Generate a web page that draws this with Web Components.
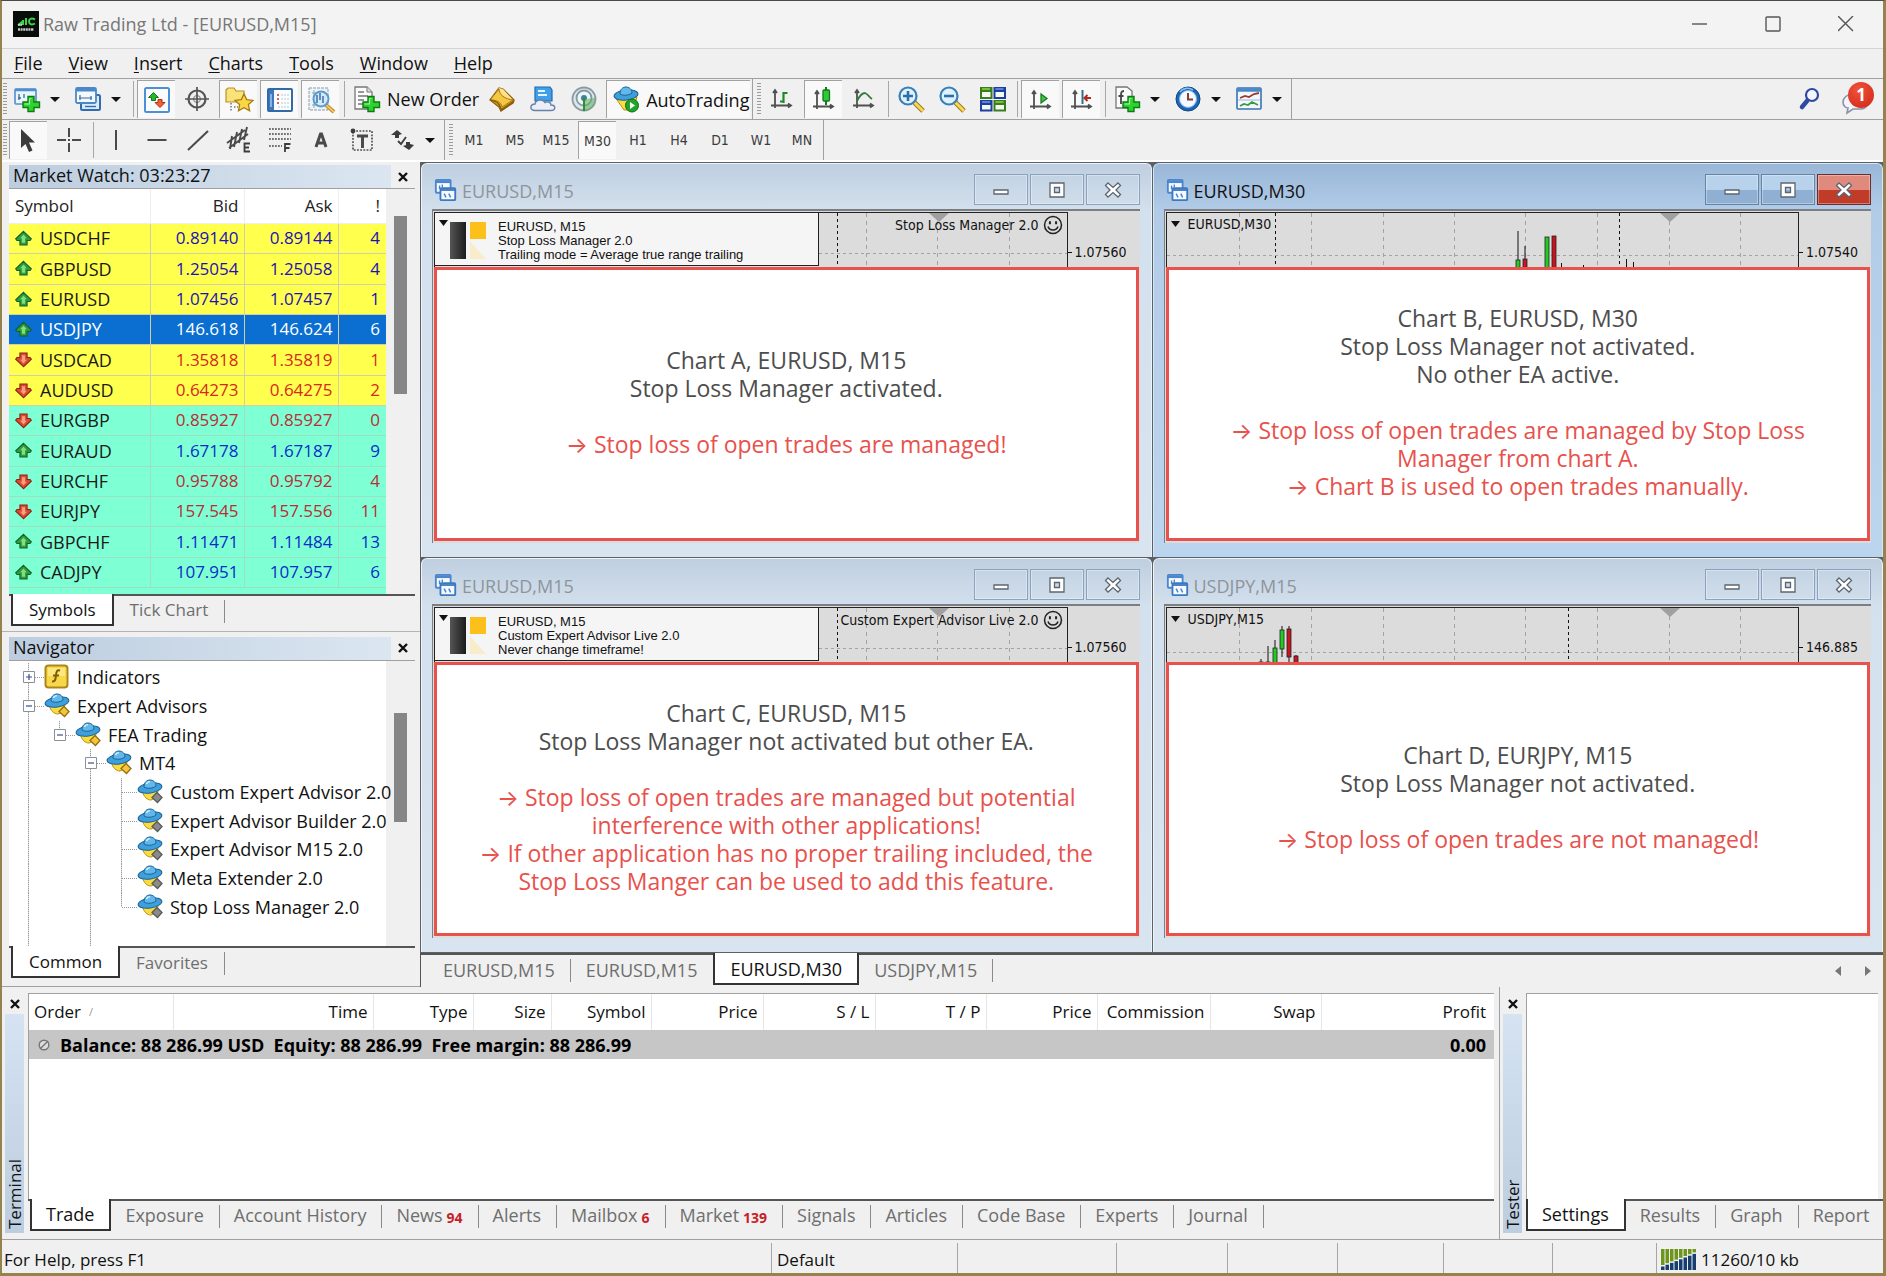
<!DOCTYPE html>
<html lang="en">
<head>
<meta charset="utf-8">
<title>Raw Trading Ltd - [EURUSD,M15]</title>
<style>
  :root {
    --ui: "Open Sans", "Inter", "Noto Sans", sans-serif;
    --chart: "DejaVu Sans Condensed", "DejaVu Sans", sans-serif;
    --face: #f0f0f0;
    --line: #a0a0a0;
    --dark: #555555;
    --caption: linear-gradient(90deg, #bccddf, #dbe6f1);
    --red: #e8514c;
  }

  * { box-sizing: border-box; }

  body {
    margin: 0;
    min-height: 100vh;
    display: flex;
    flex-direction: column;
    font: 17px/22px var(--ui);
    color: #111;
    background: var(--face);
    border: solid #94824f;
    border-width: 1px 3px 3px 2px;
    border-top-color: #4c4a44;
  }

  .bars { display: flex; border-bottom: 1px solid var(--line); }
  .bars.second { border-bottom: 2px solid #fff; }
  .bars tool-bar + tool-bar { padding-left: 4px; }
  .bars .right { margin-left: auto; display: flex; align-items: center; gap: 10px; padding-right: 9px; }

  main { flex: 1; display: grid; grid-template-columns: 418px 1fr; }
  .side { display: flex; flex-direction: column; border-bottom: 1px solid var(--line); }
  .charts { display: flex; flex-direction: column; min-width: 0; }
  .charts tab-strip { --lead: 7px; --size: 18px; --strip: 34px; --pad: 15px; --pad-end: 15px; border-left: 1px solid var(--dark); }
  .mdi {
    flex: 1;
    display: grid;
    grid-template: 1fr 1fr / 1fr 1fr;
    gap: 1px;
    padding: 1px 0 1px 1px;
    background: #5c6165;
  }
  .docked { display: grid; grid-template-columns: 1497px 1fr; height: 253px; border-bottom: 1px solid var(--line); }
  .docked tab-strip { --size: 18px; --strip: 40px; --pad: 14px; --pad-end: 15px; --raise: 3px; }
</style>
</head>
<body>

<title-bar>Raw Trading Ltd - [EURUSD,M15]</title-bar>
<menu-bar></menu-bar>

<div class="bars">
  <tool-bar>
    <tool-button icon="newChart" label="New chart" drop></tool-button>
    <tool-button icon="profiles" label="Profiles" drop></tool-button>
    <tool-sep></tool-sep>
    <tool-button icon="market" label="Market Watch" on></tool-button>
    <tool-button icon="target" label="Data Window"></tool-button>
    <tool-button icon="favorites" label="Navigator" on></tool-button>
    <tool-button icon="terminal" label="Terminal" on></tool-button>
    <tool-button icon="tester" label="Strategy Tester" on></tool-button>
    <tool-sep></tool-sep>
    <tool-button icon="newOrder" wide>New Order</tool-button>
    <tool-button icon="gold" label="MetaEditor"></tool-button>
    <tool-button icon="cloud" label="Virtual Hosting"></tool-button>
    <tool-button icon="signal" label="Signals"></tool-button>
    <tool-button icon="auto" wide on>AutoTrading</tool-button>
  </tool-bar>
  <tool-bar>
    <tool-button icon="bars" label="Bar Chart"></tool-button>
    <tool-button icon="candles" label="Candlesticks" on></tool-button>
    <tool-button icon="lineChart" label="Line Chart"></tool-button>
    <tool-sep></tool-sep>
    <tool-button icon="zoomIn" label="Zoom In"></tool-button>
    <tool-button icon="zoomOut" label="Zoom Out"></tool-button>
    <tool-button icon="tile" label="Tile Windows"></tool-button>
    <tool-sep></tool-sep>
    <tool-button icon="autoScroll" label="Auto Scroll" on></tool-button>
    <tool-button icon="chartShift" label="Chart Shift" on></tool-button>
    <tool-sep></tool-sep>
    <tool-button icon="indicator" label="Indicators" drop></tool-button>
    <tool-button icon="clock" label="Periods" drop></tool-button>
    <tool-button icon="template" label="Templates" drop></tool-button>
  </tool-bar>
  <div class="right">
    <tool-button icon="search" label="Search"></tool-button>
    <chat-badge>1</chat-badge>
  </div>
</div>

<div class="bars second">
  <tool-bar>
    <tool-button icon="cursor" label="Cursor" on></tool-button>
    <tool-button icon="cross" label="Crosshair"></tool-button>
    <tool-sep></tool-sep>
    <tool-button icon="vline" label="Vertical Line"></tool-button>
    <tool-button icon="hline" label="Horizontal Line"></tool-button>
    <tool-button icon="trend" label="Trendline"></tool-button>
    <tool-button icon="channel" label="Equidistant Channel"></tool-button>
    <tool-button icon="fibo" label="Fibonacci Retracement"></tool-button>
    <tool-button icon="text" label="Text"></tool-button>
    <tool-button icon="textLabel" label="Text Label"></tool-button>
    <tool-button icon="arrows" label="Arrows" drop></tool-button>
  </tool-bar>
  <tool-bar>
    <tool-button>M1</tool-button>
    <tool-button>M5</tool-button>
    <tool-button>M15</tool-button>
    <tool-button on>M30</tool-button>
    <tool-button>H1</tool-button>
    <tool-button>H4</tool-button>
    <tool-button>D1</tool-button>
    <tool-button>W1</tool-button>
    <tool-button>MN</tool-button>
  </tool-bar>
</div>

<main>
  <div class="side">
    <side-panel caption="Market Watch: 03:23:27">
      <market-watch></market-watch>
      <tab-strip slot="tabs" style="--strip: 37px">
        <tab-item active>Symbols</tab-item>
        <tab-item>Tick Chart</tab-item>
      </tab-strip>
    </side-panel>
    <side-panel caption="Navigator" style="flex: 1; --thumb-top: 52px; --thumb-height: 109px">
      <nav-tree></nav-tree>
      <tab-strip slot="tabs" style="--strip: 40px">
        <tab-item active>Common</tab-item>
        <tab-item>Favorites</tab-item>
      </tab-strip>
    </side-panel>
  </div>

  <div class="charts">
    <div class="mdi">
      <chart-window caption="EURUSD,M15" price="1.07560" plot="a" info="EURUSD, M15|Stop Loss Manager 2.0|Trailing mode = Average true range trailing" expert="Stop Loss Manager 2.0">
        <p>Chart A, EURUSD, M15<br>Stop Loss Manager activated.</p>
        <p class="note">→ Stop loss of open trades are managed!</p>
      </chart-window>
      <chart-window caption="EURUSD,M30" price="1.07540" plot="b" active>
        <p>Chart B, EURUSD, M30<br>Stop Loss Manager not activated.<br>No other EA active.</p>
        <p class="note">→ Stop loss of open trades are managed by Stop Loss<br>Manager from chart A.<br>→ Chart B is used to open trades manually.</p>
      </chart-window>
      <chart-window caption="EURUSD,M15" price="1.07560" plot="a" info="EURUSD, M15|Custom Expert Advisor Live 2.0|Never change timeframe!" expert="Custom Expert Advisor Live 2.0">
        <p>Chart C, EURUSD, M15<br>Stop Loss Manager not activated but other EA.</p>
        <p class="note">→ Stop loss of open trades are managed but potential<br>interference with other applications!<br>→ If other application has no proper trailing included, the<br>Stop Loss Manger can be used to add this feature.</p>
      </chart-window>
      <chart-window caption="USDJPY,M15" price="146.885" plot="d">
        <p>Chart D, EURJPY, M15<br>Stop Loss Manager not activated.</p>
        <p class="note">→ Stop loss of open trades are not managed!</p>
      </chart-window>
    </div>
    <tab-strip arrows>
      <tab-item>EURUSD,M15</tab-item>
      <tab-item nosep>EURUSD,M15</tab-item>
      <tab-item active>EURUSD,M30</tab-item>
      <tab-item>USDJPY,M15</tab-item>
    </tab-strip>
  </div>
</main>

<div class="docked">
  <dock-panel caption="Terminal">
    <trade-table></trade-table>
    <tab-strip slot="tabs">
      <tab-item active>Trade</tab-item>
      <tab-item>Exposure</tab-item>
      <tab-item>Account History</tab-item>
      <tab-item count="94">News</tab-item>
      <tab-item>Alerts</tab-item>
      <tab-item count="6">Mailbox</tab-item>
      <tab-item count="139">Market</tab-item>
      <tab-item>Signals</tab-item>
      <tab-item>Articles</tab-item>
      <tab-item>Code Base</tab-item>
      <tab-item>Experts</tab-item>
      <tab-item>Journal</tab-item>
    </tab-strip>
  </dock-panel>
  <dock-panel caption="Tester" style="border-left: 1px solid var(--line)">
    <tab-strip slot="tabs">
      <tab-item active>Settings</tab-item>
      <tab-item>Results</tab-item>
      <tab-item>Graph</tab-item>
      <tab-item nosep>Report</tab-item>
    </tab-strip>
  </dock-panel>
</div>

<status-bar></status-bar>

<script>
const PLUS = `<path d="M14 10.500h6v5.500h5.500v5.500h-5.500v4h-6v-4h-5v-5.500h5z" fill="#2fd32f" stroke="#0c7d12" stroke-width="1.400"/><path d="M15.500 12.500h2M10.500 18h5v-5" fill="none" stroke="#9df59a" stroke-width="1.200"/>`;
const AXES = `<path d="M6 4v18M2 19.500h20M4 7l2-3 2 3M19 17.500l3 2-3 2" fill="none" stroke="#505050" stroke-width="1.800"/>`;
const HAT = `<path d="M5 12c2 6 5 9 9 9 4-1 6-4 7-9z" fill="#fbdc3c" stroke="#b98f12"/><ellipse cx="13" cy="9" rx="12" ry="5" fill="#3f9fdc" stroke="#1b6395" transform="rotate(-9 13 9)"/><path d="M7 8c0-5 3-7 6-7s6 2 6 6c-3 2.500-9 3-12 1z" fill="#62b8ea" stroke="#1b6395"/><path d="M9.500 5c.6-1.600 2-2.400 3.600-2.400" fill="none" stroke="#d4f0ff" stroke-width="1.300"/>`;
const GLASS = `<path d="M16 16l9 9" stroke="#9c7718" stroke-width="5"/><path d="M16 16l9 9" stroke="#f6d857" stroke-width="3"/><circle cx="10" cy="10" r="8.500" fill="#dff1fc" stroke="#3a80b8" stroke-width="2.200"/>`;

const ICONS = {
  logo: `<path d="M0 0h26v26H0z" fill="#070d09"/><path d="M5 14l4-3v3M10 14V9M13 7v7M22 8.500c-4-2-6-.5-6 2s2.500 4 6 2" fill="none" stroke="#41d245" stroke-width="2"/><path d="M5 14h4" stroke="#ddd" stroke-width="1.500"/><path d="M5 18.500h16" stroke="#c9c9c9" stroke-width="2.600" stroke-dasharray="2 .6"/>`,
  newChart: `<rect x="1" y="3" width="21" height="15" rx="1" fill="#eaf4fd" stroke="#4f8fd0" stroke-width="1.600"/><path d="M1 4h21" stroke="#4f8fd0" stroke-width="2.500"/><path d="M5 8v6M4 12h3M10 8v4" stroke="#3a6da5" stroke-width="1.300"/>${PLUS}`,
  profiles: `<rect x="6" y="9" width="19" height="15" rx="1.500" fill="#dcebfa" stroke="#2f6cb0" stroke-width="2"/><rect x="1" y="2" width="20" height="15" rx="1.500" fill="#f3f9ff" stroke="#4a88c9" stroke-width="1.800"/><path d="M1 4h20" stroke="#4a88c9" stroke-width="3"/><path d="M5 9v5M4 12h13M16 10v4" stroke="#3d6b9b" stroke-width="1.200"/><path d="M10 20.500h11" stroke="#2f6cb0" stroke-width="1.400"/>`,
  market: `<rect x="1" y="1" width="24" height="24" rx="1.500" fill="#fafdff" stroke="#4d90d4" stroke-width="2"/><path d="M9.500 5.500l5 5h-3v3h-4v-3h-3z" fill="#2cb52f" stroke="#107a16"/><path d="M16 20.500l-5-5h3v-3h4v3h3z" fill="#f2612c" stroke="#b23112"/>`,
  target: `<circle cx="13" cy="13" r="8.500" fill="none" stroke="#555" stroke-width="2.200"/><circle cx="13" cy="13" r="3.500" fill="none" stroke="#777"/><path d="M13 1v24M1 13h24" stroke="#555" stroke-width="1.700"/>`,
  favorites: `<path d="M0 3l2-2h6l2 3h8v11H0z" fill="#f9e27a" stroke="#b79325" stroke-width="1.200"/><path d="M5 16v9M8 20h4" stroke="#777" stroke-dasharray="1.500 1.500" stroke-width="1.500"/><path d="M18 7l2.700 5.600 6.300.8-4.600 4.200 1.200 6.100-5.600-3-5.500 3 1.100-6.100-4.600-4.200 6.300-.8z" fill="#fbd746" stroke="#a67a13" stroke-width="1.300"/>`,
  terminal: `<rect x="1" y="2" width="24" height="22" rx="1" fill="#fbfdff" stroke="#3469a6" stroke-width="2"/><path d="M2 3h5v20H2z" fill="#3c78bd"/><path d="M4 7v13" stroke="#9cc7f2" stroke-width="1.500"/><path d="M10 8h2M10 12h2M10 16h2" stroke="#c33" stroke-width="1.500"/><path d="M14 8h9M14 12h9M14 16h9M11 20h12" stroke="#b5c6da" stroke-dasharray="2 1"/>`,
  tester: `<rect x="1" y="1" width="19" height="22" fill="#eef3f8" stroke="#8d9baa" stroke-dasharray="3 1"/><path d="M4 6h5M4 18h6M6 3v18" stroke="#8aa"/><path d="M18 18l8 7" stroke="#c8932a" stroke-width="4"/><path d="M18 18l8 7" stroke="#f4d27a" stroke-width="1.500"/><circle cx="13" cy="12" r="7.500" fill="#cfe7fa" fill-opacity=".85" stroke="#5b9bd0" stroke-width="2"/><path d="M9 8v8M12 6v7M15 9v7" stroke="#5585b5" stroke-width="1.800"/>`,
  newOrder: `<path d="M1 1h12l5 5v17H1z" fill="#fbfbfb" stroke="#777" stroke-width="1.300"/><path d="M13 1v5h5" fill="#ddd" stroke="#777"/><path d="M4 6h6M4 10h10M4 14h6M4 18h5" stroke="#777" stroke-width="1.600"/>${PLUS}`,
  gold: `<path d="M1 14L10 2l4 1 11 11-1 3-12 8-2-4z" fill="#e9b32e" stroke="#8b5f0c" stroke-width="1.300"/><path d="M10 2l4 1 10 11-10 7C14 14 9 12 3 13z" fill="#ffe18a"/><path d="M10 3c0 6 6 10 14 11l-11 7c-1-5-5-7-12-7z" fill="#f5c844" stroke="#a8760f"/><path d="M1 14c6 1 10 3 11 10l13-9" fill="none" stroke="#8b5f0c" stroke-width="1.600"/>`,
  cloud: `<path d="M5 1h15l2 3v11H5z" fill="#3fa0ea" stroke="#1f6cb3" stroke-width="1.200"/><path d="M8 5h7M8 9h9" stroke="#e5f5ff" stroke-width="2"/><path d="M5 24.500c-6 0-5-6.500 0-6.500 1-5 8-5 10-1.500 3-1.500 6 0 6 2.500 5 0 5 5.500 0 5.500z" fill="#e9eef7" stroke="#6a7fa8" stroke-width="1.400"/>`,
  signal: `<circle cx="13" cy="13" r="11.500" fill="#dfe6e8" stroke="#8b9ba3" stroke-width="1.800"/><circle cx="13" cy="12" r="7.500" fill="#eef4f4" stroke="#7f9ba8" stroke-width="1.800"/><circle cx="13" cy="12" r="3" fill="#3f7fa5"/><path d="M14 13l10-1c0 7-4 12-10 13z" fill="#59b05a" opacity=".55"/><path d="M13 12v13" stroke="#2f8b34" stroke-width="2"/>`,
  auto: `<path d="M2 10l9 13h9l4-13z" fill="#fbdc3c" stroke="#b98f12"/><ellipse cx="13" cy="8" rx="12" ry="5" fill="#3f9fdc" stroke="#1b6395" transform="rotate(-6 13 8)"/><path d="M7 7c0-5 3-7 6-7s6 2 6 6c-3 2.500-9 3-12 1z" fill="#62b8ea" stroke="#1b6395"/><circle cx="19" cy="18.500" r="6.500" fill="#1fa52a" stroke="#0c6e14"/><path d="M17 15l5 3.500-5 3.500z" fill="#fff"/>`,
  bars: `${AXES}<path d="M14.500 6v11M14.500 7h4M11 15.500h3.500" stroke="#1f8a2a" stroke-width="2.200"/>`,
  candles: `${AXES}<path d="M15 0v18" stroke="#13791c" stroke-width="2"/><rect x="12" y="3" width="6.500" height="11" rx="1" fill="#2fca36" stroke="#13791c" stroke-width="1.300"/>`,
  lineChart: `${AXES}<path d="M6 15c3-6 5-8 8-8 3 1 4 4 7 6" fill="none" stroke="#3a7a40" stroke-width="1.800"/>`,
  zoomIn: `${GLASS}<path d="M10 5v10M5 10h10" stroke="#2d6ea6" stroke-width="2.600"/>`,
  zoomOut: `${GLASS}<path d="M5 10h10" stroke="#2d6ea6" stroke-width="2.600"/>`,
  tile: `<path d="M0 1h12.500v12H0zM13.500 14H26v11.500H13.500z" fill="#3b7d1c"/><path d="M13.500 1H26v12H13.500zM0 14h12.500v11.500H0z" fill="#1d3fa0"/><path d="M2 6h8.500v5H2zM15.500 6H24v5h-8.500zM2 19h8.500v4.500H2zM15.500 19H24v4.500h-8.500z" fill="#f2f8f2"/><path d="M2 3h8M15.500 16h8" stroke="#8fd24b" stroke-width="1.500"/><path d="M15.500 3h8M2 16h8" stroke="#6f9be8" stroke-width="1.500"/>`,
  autoScroll: `${AXES}<path d="M13 7l6 4.500-6 4.500z" fill="#3cc846" stroke="#187c20" stroke-width="1.300"/>`,
  chartShift: `${AXES}<path d="M13.500 3v14" stroke="#2e6f96" stroke-width="2"/><path d="M22 11h-7M18.500 8l-3 3 3 3" fill="none" stroke="#b3281c" stroke-width="2"/>`,
  indicator: `<path d="M2 1h11l5 4v17H2z" fill="#fbfbfb" stroke="#777" stroke-width="1.300"/><path d="M10 5c-3 0-3 2-3 5v8M4.500 10h5" fill="none" stroke="#444" stroke-width="1.800"/>${PLUS}`,
  clock: `<circle cx="13" cy="13" r="12" fill="#1e65b5" stroke="#134582"/><circle cx="13" cy="13" r="8.500" fill="#f4faff" stroke="#7db7ec"/><path d="M13 7v6.500h5" fill="none" stroke="#8a3b2c" stroke-width="2"/><path d="M5 6c3-4 9-5 13-2" fill="none" stroke="#7fc0f5" stroke-width="1.600"/>`,
  template: `<rect x="1" y="2" width="24" height="21" rx="1" fill="#f2f8fe" stroke="#3a72b0" stroke-width="1.600"/><path d="M1 4h24" stroke="#4a88c9" stroke-width="3.500"/><path d="M4 12l5-2 4 1 5-3 5-1" fill="none" stroke="#9b3a2c" stroke-width="1.800"/><path d="M2 14h22" stroke="#9bb8d6"/><path d="M4 20l4-2 4 1 4-3 6 3" fill="none" stroke="#3a9a3c" stroke-width="1.800"/>`,
  search: `<path d="M11 15l-5 6" stroke="#2f49a3" stroke-width="4.500" stroke-linecap="round"/><circle cx="16" cy="9" r="6" fill="#f3f6fd" stroke="#2f49a3" stroke-width="2.200"/>`,
  cursor: `<path d="M5 1v19l4.500-4 3.500 8 3.500-1.500-3.500-8H19z" fill="#3c3c3c"/>`,
  cross: `<path d="M13 1v9M13 16v9M1 13h9M16 13h9" stroke="#4a4a4a" stroke-width="2"/><path d="M12 13h2" stroke="#4a4a4a" stroke-width="2"/>`,
  vline: `<path d="M13 3v20" stroke="#4a4a4a" stroke-width="2"/>`,
  hline: `<path d="M3.500 13h19" stroke="#4a4a4a" stroke-width="2"/>`,
  trend: `<path d="M3 23L23 4" stroke="#4a4a4a" stroke-width="2"/>`,
  channel: `<path d="M1 16L19 3M3 21L22 7M6 9l-2 13M11 5L8 20M16 2l-3 14M21 0l-3 13" stroke="#4a4a4a" stroke-width="1.900"/><path d="M24 16.500h-5.500v8H24M18.500 20.500H23" fill="none" stroke="#3c3c3c" stroke-width="1.800"/>`,
  fibo: `<path d="M2 2h22M2 7h22M2 12h22M2 19h13" stroke="#4a4a4a" stroke-width="1.700" stroke-dasharray="1.800 1.200"/><path d="M23.500 17H18v8M18 21h4.500" fill="none" stroke="#3c3c3c" stroke-width="1.800"/>`,
  text: `<path d="M8 20L12.500 7h1L18 20M9.500 16h7" fill="none" stroke="#4a4a4a" stroke-width="3"/>`,
  textLabel: `<rect x="4" y="4" width="19" height="19" fill="none" stroke="#4a4a4a" stroke-width="1.600" stroke-dasharray="1.800 1.400"/><circle cx="4" cy="4" r="2.400" fill="#3c3c3c"/><path d="M8 9h11M13.500 9v12" stroke="#4a4a4a" stroke-width="3"/>`,
  arrows: `<path d="M2 8l6-5 5 4-3 1v3H6V8zM14 19l3-1v-3h4v2l4 1-5 5z" fill="#3c3c3c"/><path d="M9 14l3 3 5-7" fill="none" stroke="#3c3c3c" stroke-width="1.800"/>`,
  fx: `<rect x="1.500" y="1.500" width="22" height="22" rx="3" fill="#f8d84a" stroke="#a98719" stroke-width="2"/><path d="M4 4h17v8H4z" fill="#fff0a0" opacity=".6"/><path d="M16 6.500c-3-1-3.600 1-4 4.500-.4 4-.6 7-4 6.500M9 11.500h6" fill="none" stroke="#7c5c05" stroke-width="2"/>`,
  ea: `${HAT}<path d="M20 13.500l5 5-4.500 5-5.500-5z" fill="#f7c53b" stroke="#94700f" stroke-width="1.300"/>`,
  eaOff: `${HAT}<path d="M20 13.500l5 5-4.500 5-5.500-5z" fill="#8b8b8b" stroke="#5a5a5a" stroke-width="1.300"/>`,
  chart: `<rect x="2" y="2" width="16" height="14" rx="1" fill="#f5faff" stroke="#4b86cf" stroke-width="2"/><path d="M2 4h16" stroke="#4b86cf" stroke-width="3"/><path d="M6 8v4M9 7v3" stroke="#4b86cf" stroke-width="1.500"/><rect x="7" y="11" width="16" height="13" rx="1" fill="#f5faff" stroke="#3d78c2" stroke-width="2"/><path d="M7 13h16" stroke="#3d78c2" stroke-width="2"/><path d="M11 17l2 4M16 17l2 4" stroke="#4b86cf" stroke-width="1.600"/>`,
  up: `<path d="M13 2l12 11.500-2 2.500h-4.500v7h-11v-7H3l-2-2.500z" fill="#2f9a3d" stroke="#12602a" stroke-width="1.600"/><path d="M13 7l5 5.500h-2.500v7h-5v-7H8z" fill="#7ee07a"/>`,
  down: `<path d="M13 24L1 12.500 3 10h4.500V3h11v7H23l2 2.500z" fill="#d84c30" stroke="#8c2013" stroke-width="1.600"/><path d="M13 19l-5-5.500h2.500v-7h5v7H18z" fill="#ff9c82"/>`,
  smile: `<circle cx="13" cy="13" r="11" fill="none" stroke="#222" stroke-width="2"/><path d="M9 8v4M17 8v4" stroke="#222" stroke-width="2.600"/><path d="M6.500 15c2 6 11 6 13 0" fill="none" stroke="#222" stroke-width="2"/>`,
};

const svg = (name, size = 26) =>
  `<svg width="${size}" height="${size}" viewBox="0 0 26 26" aria-hidden="true" style="flex: none; display: block; overflow: visible">${ICONS[name]}</svg>`;

const CLOSE = `<svg width="10" height="10" viewBox="0 0 10 10" aria-hidden="true" style="display: block"><path d="M1 1l8 8M9 1L1 9" stroke="#111" stroke-width="2.400"/></svg>`;

const RESET = `
  * { box-sizing: border-box; }
  button { font: inherit; color: inherit; background: none; border: 0; padding: 0; margin: 0; }
`;

// Small base class: subclasses only return their markup
class Base extends HTMLElement {
  constructor() {
    super();
    this.attachShadow({ mode: "open" });
  }

  connectedCallback() {
    this.shadowRoot.innerHTML = `<style>${RESET}</style>${this.render()}`;
  }

  get(name) {
    return this.getAttribute(name) || "";
  }
}

class TitleBar extends Base {
  render() {
    return `
      <style>
        :host { display: flex; align-items: center; height: 48px; padding: 0 1px 2px 11px; gap: 4px; background: #f3f3f3; border-bottom: 1px solid #d4d4d4; }
        span { font-size: 18px; color: #777; }
        .controls { margin-left: auto; display: flex; }
        button { width: 73px; height: 40px; display: grid; place-items: center; }
        .controls path, .controls rect { fill: none; stroke: #555; stroke-width: 1.400; }
      </style>
      ${svg("logo")}
      <span><slot></slot></span>
      <div class="controls">
        <button aria-label="Minimize"><svg width="16" height="16"><path d="M0 8h15"/></svg></button>
        <button aria-label="Maximize"><svg width="16" height="16"><rect x="1" y="1" width="14" height="14" rx="1"/></svg></button>
        <button aria-label="Close"><svg width="16" height="16"><path d="M0 0l15 15M15 0L0 15"/></svg></button>
      </div>`;
  }
}

class MenuBar extends Base {
  render() {
    const items = ["File", "View", "Insert", "Charts", "Tools", "Window", "Help"];
    return `
      <style>
        :host { display: flex; gap: 26px; height: 30px; align-items: center; padding: 0 0 2px 12px; font-size: 18px; border-bottom: 1px solid var(--line); }
        u { text-underline-offset: 2px; }
      </style>
      ${items.map((t) => `<button><u>${t[0]}</u>${t.slice(1)}</button>`).join("")}`;
  }
}

class ToolBar extends Base {
  render() {
    return `
      <style>
        :host { display: flex; gap: 3px; height: 40px; padding: 1px 2px 1px 1px; border-right: 1px solid var(--line); }
        i { width: 4px; margin: 3px -1px 3px 0; background: repeating-linear-gradient(#9a9a9a 0 1px, transparent 1px 3px); }
      </style>
      <i></i><slot></slot>`;
  }
}

class ToolSep extends Base {
  render() {
    return `<style>:host { width: 1px; margin: 1px 0 1px 2px; background: #a8a8a8; }</style>`;
  }
}

class ToolButton extends Base {
  render() {
    const icon = this.get("icon");
    return `
      <style>
        :host { display: flex; }
        button { min-width: 38px; display: flex; align-items: center; justify-content: center; font: 14px/20px var(--chart); color: #3c3c3c; }
        :host([drop]) button { width: 58px; padding-left: 5px; justify-content: flex-start; }
        :host([drop]) button::after { content: ""; margin-left: 10px; border: 5px solid transparent; border-top-color: #111; border-bottom: 0; }
        :host([wide]) button { padding: 0 1px 0 6px; gap: 7px; font: 18px/24px var(--ui); color: #111; }
        :host([on]) button { background: #f9f9f9; border: solid #a2a2a2; border-width: 1px 0 0 1px; }
      </style>
      <button aria-label="${this.get("label") || this.textContent}">${icon ? svg(icon) : ""}<slot></slot></button>`;
  }
}

class ChatBadge extends Base {
  render() {
    return `
      <style>
        button { position: relative; display: block; width: 36px; height: 36px; }
        b { position: absolute; top: 1px; right: 0; width: 26px; height: 26px; border-radius: 13px; background: radial-gradient(circle at 40% 30%, #f0533b, #cf2415); color: #fff; font: 700 17px/26px var(--ui); text-align: center; }
      </style>
      <button aria-label="Messages">
        <svg width="30" height="36" aria-hidden="true"><path d="M12 13c-6 0-10 4-10 8s3 6 5 6l-1 5 6-4h8c4 0 7-3 7-7s-3-8-9-8z" fill="#f4f5fa" stroke="#8c90a8" stroke-width="1.600"/></svg>
        <b><slot></slot></b>
      </button>`;
  }
}

class TabStrip extends Base {
  render() {
    const arrow = (d, label) => `<button aria-label="${label}"><svg width="6" height="10"><path d="${d}" fill="#777"/></svg></button>`;
    return `
      <style>
        :host { display: flex; height: var(--strip, 38px); font-size: var(--size, 17px); flex: none; }
        .lead, .rest { border-top: 2px solid var(--dark); }
        .lead { width: var(--lead, 2px); }
        .rest { flex: 1; display: flex; justify-content: flex-end; align-items: center; gap: 24px; padding: 0 12px 4px 0; }
      </style>
      <div class="lead"></div><slot></slot>
      <div class="rest">${this.hasAttribute("arrows") ? arrow("M6 0v10L0 5z", "Scroll left") + arrow("M0 0v10l6-5z", "Scroll right") : ""}</div>`;
  }
}

class TabItem extends Base {
  render() {
    const count = this.get("count");
    return `
      <style>
        :host { display: flex; align-items: flex-start; border-top: 2px solid var(--dark); }
        button { height: 30px; padding: 0 var(--pad-end, 16px) var(--raise, 1px) var(--pad, 16px); color: #6e6e6e; white-space: nowrap; display: flex; align-items: center; border-right: 1px solid transparent; border-image: linear-gradient(transparent 4px, #8a8a8a 4px 27px, transparent 27px) 0 1 0 0; }
        :host([nosep]) button { border-image: none; }
        :host([active]) { border-top-color: #fff; }
        :host([active]) button { color: #111; background: #fff; border: solid #333; border-width: 0 2px 2px; border-image: none; padding-top: 3px; margin-top: -2px; height: 32px; }
        b { align-self: flex-end; font-size: 14px; line-height: 20px; color: #c81e28; margin-left: 4px; }
      </style>
      <button><slot></slot>${count ? `<b>${count}</b>` : ""}</button>`;
  }
}

class SidePanel extends Base {
  render() {
    return `
      <style>
        :host { display: flex; flex-direction: column; padding: 3px 5px 0 7px; border-bottom: 1px solid #b4b4b4; }
        :host(:last-child) { padding-top: 5px; border: 0; }
        header { display: flex; height: 24px; border-bottom: 1px solid var(--line); }
        h2 { flex: 1; margin: 0; padding-left: 4px; font: 18px/20px var(--ui); background: var(--caption); }
        button { width: 24px; display: grid; place-items: center; }
        .body { flex: 1; display: flex; background: #fff; }
        .view { flex: 1; display: flex; position: relative; z-index: 1; min-width: 0; }
        .scroll { width: 29px; background: var(--face); padding: var(--thumb-top, 27px) 8px 0; }
        .thumb { height: var(--thumb-height, 178px); background: #868686; }
      </style>
      <header><h2>${this.get("caption")}</h2><button aria-label="Close">${CLOSE}</button></header>
      <div class="body"><div class="view"><slot></slot></div><div class="scroll"><div class="thumb"></div></div></div>
      <slot name="tabs"></slot>`;
  }
}

class MarketWatch extends Base {
  render() {
    const rows = [
      ["up", "USDCHF", "0.89140", "0.89144", 4],
      ["up", "GBPUSD", "1.25054", "1.25058", 4],
      ["up", "EURUSD", "1.07456", "1.07457", 1],
      ["up", "USDJPY", "146.618", "146.624", 6, "sel"],
      ["down", "USDCAD", "1.35818", "1.35819", 1],
      ["down", "AUDUSD", "0.64273", "0.64275", 2],
      ["down", "EURGBP", "0.85927", "0.85927", 0, "aqua"],
      ["up", "EURAUD", "1.67178", "1.67187", 9, "aqua"],
      ["down", "EURCHF", "0.95788", "0.95792", 4, "aqua"],
      ["down", "EURJPY", "157.545", "157.556", 11, "aqua"],
      ["up", "GBPCHF", "1.11471", "1.11484", 13, "aqua"],
      ["up", "CADJPY", "107.951", "107.957", 6, "aqua"],
    ];
    const row = ([dir, symbol, bid, ask, spread, cls = ""]) => `
      <tr class="${dir} ${cls}"><td><div>${svg(dir, 17)}${symbol}</div></td><td>${bid}</td><td>${ask}</td><td>${spread}</td></tr>`;
    return `
      <style>
        :host { flex: 1; display: block; padding-bottom: 6px; background: linear-gradient(#fff 60%, #7fffd4 60%); }
        table { width: 100%; border-collapse: collapse; table-layout: fixed; }
        th, td { padding: 0 5px 0 0; text-align: right; font-weight: 400; border-right: 1px solid #cfcfae; border-bottom: 1px solid #cfcfae; }
        th { height: 34px; background: #fff; border-color: #eee; }
        th:first-child { text-align: left; padding-left: 6px; }
        th:last-child, td:last-child { border-right: 0; padding-right: 6px; }
        tr { height: 30px; background: #ffff4d; color: #d8281e; }
        tr:nth-child(3n + 2) { height: 31px; }
        tr.up { color: #1d12b4; }
        tr.aqua { background: #7fffd4; color: #bb2c36; }
        tr.aqua td { border-color: #9fddc4; }
        tr.aqua.up { color: #0a2cc8; }
        tr.sel, tr.sel td:first-child { background: #0a6fd0; color: #fff; }
        td:first-child { color: #1a1a1a; font-size: 18px; }
        thead tr { color: #222; }
        td div { display: flex; gap: 8px; align-items: center; padding-left: 6px; }
      </style>
      <table>
        <colgroup><col style="width: 141px"><col style="width: 94px"><col style="width: 94px"><col></colgroup>
        <thead><tr><th>Symbol</th><th>Bid</th><th>Ask</th><th>!</th></tr></thead>
        <tbody>${rows.map(row).join("")}</tbody>
      </table>`;
  }
}

class NavTree extends Base {
  render() {
    // guides: one letter per level, f = full line, t = upper half, - = empty
    const rows = [
      ["f", "+", "fx", "Indicators"],
      ["f", "-", "ea", "Expert Advisors"],
      ["ft", "-", "ea", "FEA Trading"],
      ["f-f", "-", "ea", "MT4"],
      ["f-ff", "", "eaOff", "Custom Expert Advisor 2.0"],
      ["f-ff", "", "eaOff", "Expert Advisor Builder 2.0"],
      ["f-ff", "", "eaOff", "Expert Advisor M15 2.0"],
      ["f-ff", "", "eaOff", "Meta Extender 2.0"],
      ["f-ft", "", "eaOff", "Stop Loss Manager 2.0"],
    ];
    const box = (sign) => `<svg class="box" width="12" height="12"><path d="M.5.5h11v11H.5z" fill="#fff" stroke="#8e8e9a"/><path d="M3 6h6${sign === "+" ? "M6 3v6" : ""}" stroke="#3d4f8a" stroke-width="1.200"/></svg>`;
    const cells = (guides, sign) => [...guides].map((g, i) =>
      `<i class="${g}${i === guides.length - 1 ? " leaf" : ""}">${i === guides.length - 1 && sign ? box(sign) : ""}</i>`).join("");
    return `
      <style>
        :host { flex: 1; display: flex; flex-direction: column; padding: 2px 0 0 4px; min-width: 0; font-size: 18px; }
        div { display: flex; align-items: center; height: 29px; white-space: nowrap; }
        div:nth-of-type(3n) { height: 28px; }
        .rest { flex: 1; }
        i { flex: none; width: 31px; align-self: stretch; display: grid; place-items: center; background: no-repeat 15px 0; }
        .f { background-image: repeating-linear-gradient(#999 0 1px, #ddd 1px 2px); background-size: 1px 100%; }
        .t { background-image: repeating-linear-gradient(#999 0 1px, #ddd 1px 2px); background-size: 1px 50%; }
        .leaf { position: relative; }
        .leaf::after { content: ""; position: absolute; left: 16px; right: 0; top: 14px; border-top: 1px dotted #999; }
        .box { position: relative; z-index: 1; }
        span { margin-left: 7px; }
      </style>
      ${rows.map(([g, sign, icon, text]) => `<div>${cells(g, sign)}${svg(icon)}<span>${text}</span></div>`).join("")}
      <div class="rest"><i class="f"></i><i></i><i class="f"></i></div>`;
  }
}

// Chart strips, in pixels from the plot's top left corner
const vgrid = (xs) => xs.map((x) => `<path d="M${x} 0v60" stroke="#a3a3a3" stroke-dasharray="4 4"/>`).join("");
const vday = (xs) => xs.map((x) => `<path d="M${x} 0v60" stroke="#111" stroke-dasharray="3 3"/>`).join("");
const hgrid = (y) => `<path d="M0 ${y}h640" stroke="#a3a3a3" stroke-dasharray="3 3"/>`;
const candle = (x, wickTop, wickEnd, top, end, color) =>
  `<path d="M${x} ${wickTop}V${wickEnd}" stroke="#111"/><rect x="${x - 2}" y="${top}" width="4" height="${end - top}" fill="${color}" stroke="#222" stroke-width=".8"/>`;
const shift = (x) => `<path d="M${x - 10} 0h20l-10 9z" fill="#a0a0a0"/>`;
const G = "#22cc22", R = "#c8141e";

const PLOTS = {
  a: vgrid([431.500, 502.500, 574.500]) + vday([402.500]) + hgrid(40.500) + shift(504),
  b: vgrid([72.500, 144.500, 216.500, 287.500, 358.500, 430.500, 502.500, 573.500]) + vday([108.500, 452.500]) + hgrid(42.500) + shift(503) +
    candle(351, 18, 60, 47, 60, G) + candle(358, 33, 60, 46, 60, R) + candle(380, 24, 60, 24, 60, G) + candle(387, 23, 60, 23, 60, R) +
    `<path d="M394.500 50v9M416.500 52v9M459.500 46v12M466.500 49v12" stroke="#111"/>`,
  d: vgrid([72.500, 144.500, 216.500, 287.500, 358.500, 430.500, 502.500, 573.500]) + vday([401.500]) + hgrid(44.500) + shift(503) +
    candle(94, 51, 60, 54, 60, G) + candle(101, 38, 60, 54, 60, R) + candle(108, 32, 60, 40, 60, G) + candle(115, 18, 49, 22, 41, G) +
    candle(122, 18, 54, 21, 49, R) + candle(129, 47, 60, 48, 60, R),
};

class ChartWindow extends Base {
  render() {
    const info = this.get("info").split("|");
    const label = info.length > 1
      ? `<div class="info">
          <svg width="60" height="50" aria-hidden="true"><defs><linearGradient id="k"><stop stop-color="#555"/><stop offset="1" stop-color="#1c1c1c"/></linearGradient></defs><path d="M4 7h9l-4.500 6z" fill="#111"/><path d="M15 9h16v37H15z" fill="url(#k)"/><path d="M35 9h16v17H35z" fill="#fbc11a"/><path d="M35 28l16 18H35z" fill="#f8eccb"/></svg>
          <div>${info.map((t) => `${t}<br>`).join("")}</div>
        </div>
        <div class="expert">${this.get("expert")}${svg("smile", 20)}</div>`
      : `<div class="label"><svg width="9" height="6"><path d="M0 0h9L4.500 6z" fill="#111"/></svg>${this.get("caption")}</div>`;
    return `
      <style>
        :host { display: flex; flex-direction: column; min-width: 0; padding: 0 11px 14px 10px; border-radius: 6px 6px 0 0; border: 1px solid #eef4fa; border-bottom-width: 0; color: #8e949b;
          background: linear-gradient(#bfcfe0, #d3e0ed 47px, #d8e4f0); }
        :host([active]) { color: #111; border-color: #d4e6f8; background: linear-gradient(#9ab7d8, #b2cce8 47px, #bcd5ee); }
        header { display: flex; align-items: center; height: 45px; gap: 2px; padding-left: 2px; }
        h2 { flex: 1; margin: 0 0 0 2px; padding-top: 9px; font: 18px/22px var(--ui); }
        header > svg { margin-top: 7px; }
        header button { width: 54px; height: 31px; margin-top: 6px; border: 1px solid #8ba3bf; display: grid; place-items: center; box-shadow: inset 0 0 0 1px #ffffff55; }
        :host([active]) button { background: linear-gradient(#b9d2ec 50%, #8fb0d3 50%); border-color: #6583a5; }
        :host([active]) button:last-child { background: linear-gradient(#e08a7d 50%, #c03c28 50%); border-color: #6e2c28; }
        header button path { fill: #fff; stroke: #5c6670; stroke-width: 1.300; }
        .body { flex: 1; display: flex; flex-direction: column; padding: 1px 0 2px 1px; background: #dcdcdc; border: solid #7b7f84; border-width: 2px 0 0 1px; }
        .head { display: flex; height: 55px; }
        .plot { flex: 1; display: grid; grid-template-areas: "p"; border: 1px solid #222; border-bottom: 0; font: 14px/18px var(--chart); color: #111; overflow: hidden; }
        .plot > * { grid-area: p; }
        .grid { width: 100%; height: 55px; }
        .axis { width: 72px; padding: 31px 0 0; font: 14px/18px var(--chart); color: #111; display: flex; align-items: flex-start; gap: 3px; }
        .axis::before { content: ""; width: 4px; margin-top: 9px; border-top: 1px solid #111; }
        .info { width: 384px; height: 53px; display: flex; font: 13px/14px "Liberation Sans", Arial, sans-serif; background: #f5f5f5; border: solid #222; border-width: 0 1px 1px 0; }
        .info div { padding: 7px 0 0 3px; }
        .info svg { flex: none; }
        .expert { justify-self: end; display: flex; gap: 4px; margin: 2px 4px 0; height: 20px; align-items: center; }
        .label { display: flex; gap: 8px; align-items: center; height: 18px; margin: 2px 4px; }
        .over { flex: 1; display: flex; flex-direction: column; justify-content: center; gap: 28px; padding-bottom: 4px; background: #fff; border: 3px solid var(--red); color: #4d4d4d; font: 23px/28px var(--ui); text-align: center; margin-right: 1px; }
        ::slotted(p) { margin: 0; }
        ::slotted(.note) { color: var(--red); }
      </style>
      <header>
        ${svg("chart", 24)}
        <h2>${this.get("caption")}</h2>
        <button aria-label="Minimize"><svg width="18" height="16"><path d="M2 8h14v4H2z"/></svg></button>
        <button aria-label="Maximize"><svg width="18" height="16"><path d="M2 1h14v14H2zM6.500 5.500v5h5v-5z" fill-rule="evenodd"/></svg></button>
        <button aria-label="Close"><svg width="18" height="16"><path d="M4 1L9 5.500 14 1l2.500 2.500L12 8l4.500 4.500L14 15 9 10.500 4 15l-2.500-2.500L6 8 1.500 3.500z"/></svg></button>
      </header>
      <div class="body">
        <div class="head">
          <div class="plot"><svg class="grid" aria-hidden="true">${PLOTS[this.get("plot")]}</svg>${label}</div>
          <div class="axis">${this.get("price")}</div>
        </div>
        <div class="over"><slot></slot></div>
      </div>`;
  }
}

class DockPanel extends Base {
  render() {
    return `
      <style>
        :host { display: grid; grid-template-columns: 26px 1fr; padding: 6px 5px 0 0; min-width: 0; }
        aside { display: flex; flex-direction: column; padding: 0 4px 6px 3px; }
        button { height: 21px; display: grid; place-items: center; }
        h2 { flex: 1; margin: 0; padding-top: 4px; writing-mode: vertical-rl; transform: rotate(180deg); font: 500 17px/19px var(--ui); background: linear-gradient(#bccddf, #d5e3f2); }
        section { display: flex; flex-direction: column; min-width: 0; }
        .view { flex: 1; background: #fff; border: solid var(--line); border-width: 1px 0 0 1px; }
      </style>
      <aside><button aria-label="Close">${CLOSE}</button><h2>${this.get("caption")}</h2></aside>
      <section><div class="view"><slot></slot></div><slot name="tabs"></slot></section>`;
  }
}

class TradeTable extends Base {
  render() {
    const cols = [["Order", 144], ["Time", 200], ["Type", 100], ["Size", 78], ["Symbol", 100], ["Price", 112], ["S / L", 112], ["T / P", 111], ["Price", 111], ["Commission", 113], ["Swap", 111], ["Profit", 0]];
    return `
      <style>
        table { width: 100%; border-collapse: collapse; table-layout: fixed; }
        th, td { padding: 0 5px; text-align: right; white-space: nowrap; }
        th { height: 36px; font-weight: 400; border-right: 1px solid #e6e6e6; }
        th:first-child, td:first-child { text-align: left; }
        th:last-child { border: 0; }
        th:last-child, td:last-child { padding-right: 8px; }
        td { height: 29px; font-size: 18px; font-weight: 700; color: #000; background: #c6c6c6; }
        td:first-child div { display: flex; align-items: center; gap: 10px; padding-left: 4px; }
        small { color: #999; font-size: 11px; margin-left: 8px; vertical-align: 2px; }
        span { white-space: pre; }
      </style>
      <table>
        <colgroup>${cols.map(([, w]) => `<col${w ? ` style="width: ${w}px"` : ""}>`).join("")}</colgroup>
        <thead><tr>${cols.map(([t], i) => `<th>${t}${i ? "" : "<small>/</small>"}</th>`).join("")}</tr></thead>
        <tbody><tr>
          <td colspan="11"><div><svg width="12" height="12" aria-hidden="true"><circle cx="6" cy="6" r="4.800" fill="#ddd" stroke="#777" stroke-width="1.400"/><path d="M2 10l8-8" stroke="#777" stroke-width="1.400"/></svg><span>Balance: 88 286.99 USD  Equity: 88 286.99  Free margin: 88 286.99</span></div></td>
          <td>0.00</td>
        </tr></tbody>
      </table>`;
  }
}

class StatusBar extends Base {
  render() {
    // connection meter: green on top, blue rising underneath
    const meter = [...Array(8)].map((_, i) =>
      `<path d="M${i * 4.500} 0h3.500v${16 - i * 1.800}h-3.500z" fill="#6f961c"/><path d="M${i * 4.500} ${17.500 - i * 1.800}h3.500V21h-3.500z" fill="#163f70"/>`).join("");
    return `
      <style>
        :host { display: grid; grid-template-columns: 769px 186px 159px 111px 110px 106px 109px 104px 1fr; height: 33px; font-size: 17px; }
        div { display: flex; align-items: center; gap: 5px; padding: 3px 0 0 5px; border-left: 1px solid #a6a6a6; margin: 3px 0 0; }
        .help { border: 0; padding-left: 2px; }
        .traffic { padding-left: 4px; }
      </style>
      <div class="help">For Help, press F1</div><div>Default</div><div></div><div></div><div></div><div></div><div></div><div></div>
      <div class="traffic"><svg width="35" height="21" aria-hidden="true">${meter}</svg>11260/10 kb</div>`;
  }
}

customElements.define("title-bar", TitleBar);
customElements.define("menu-bar", MenuBar);
customElements.define("tool-bar", ToolBar);
customElements.define("tool-sep", ToolSep);
customElements.define("tool-button", ToolButton);
customElements.define("chat-badge", ChatBadge);
customElements.define("tab-strip", TabStrip);
customElements.define("tab-item", TabItem);
customElements.define("side-panel", SidePanel);
customElements.define("market-watch", MarketWatch);
customElements.define("nav-tree", NavTree);
customElements.define("chart-window", ChartWindow);
customElements.define("dock-panel", DockPanel);
customElements.define("trade-table", TradeTable);
customElements.define("status-bar", StatusBar);
</script>
</body>
</html>
